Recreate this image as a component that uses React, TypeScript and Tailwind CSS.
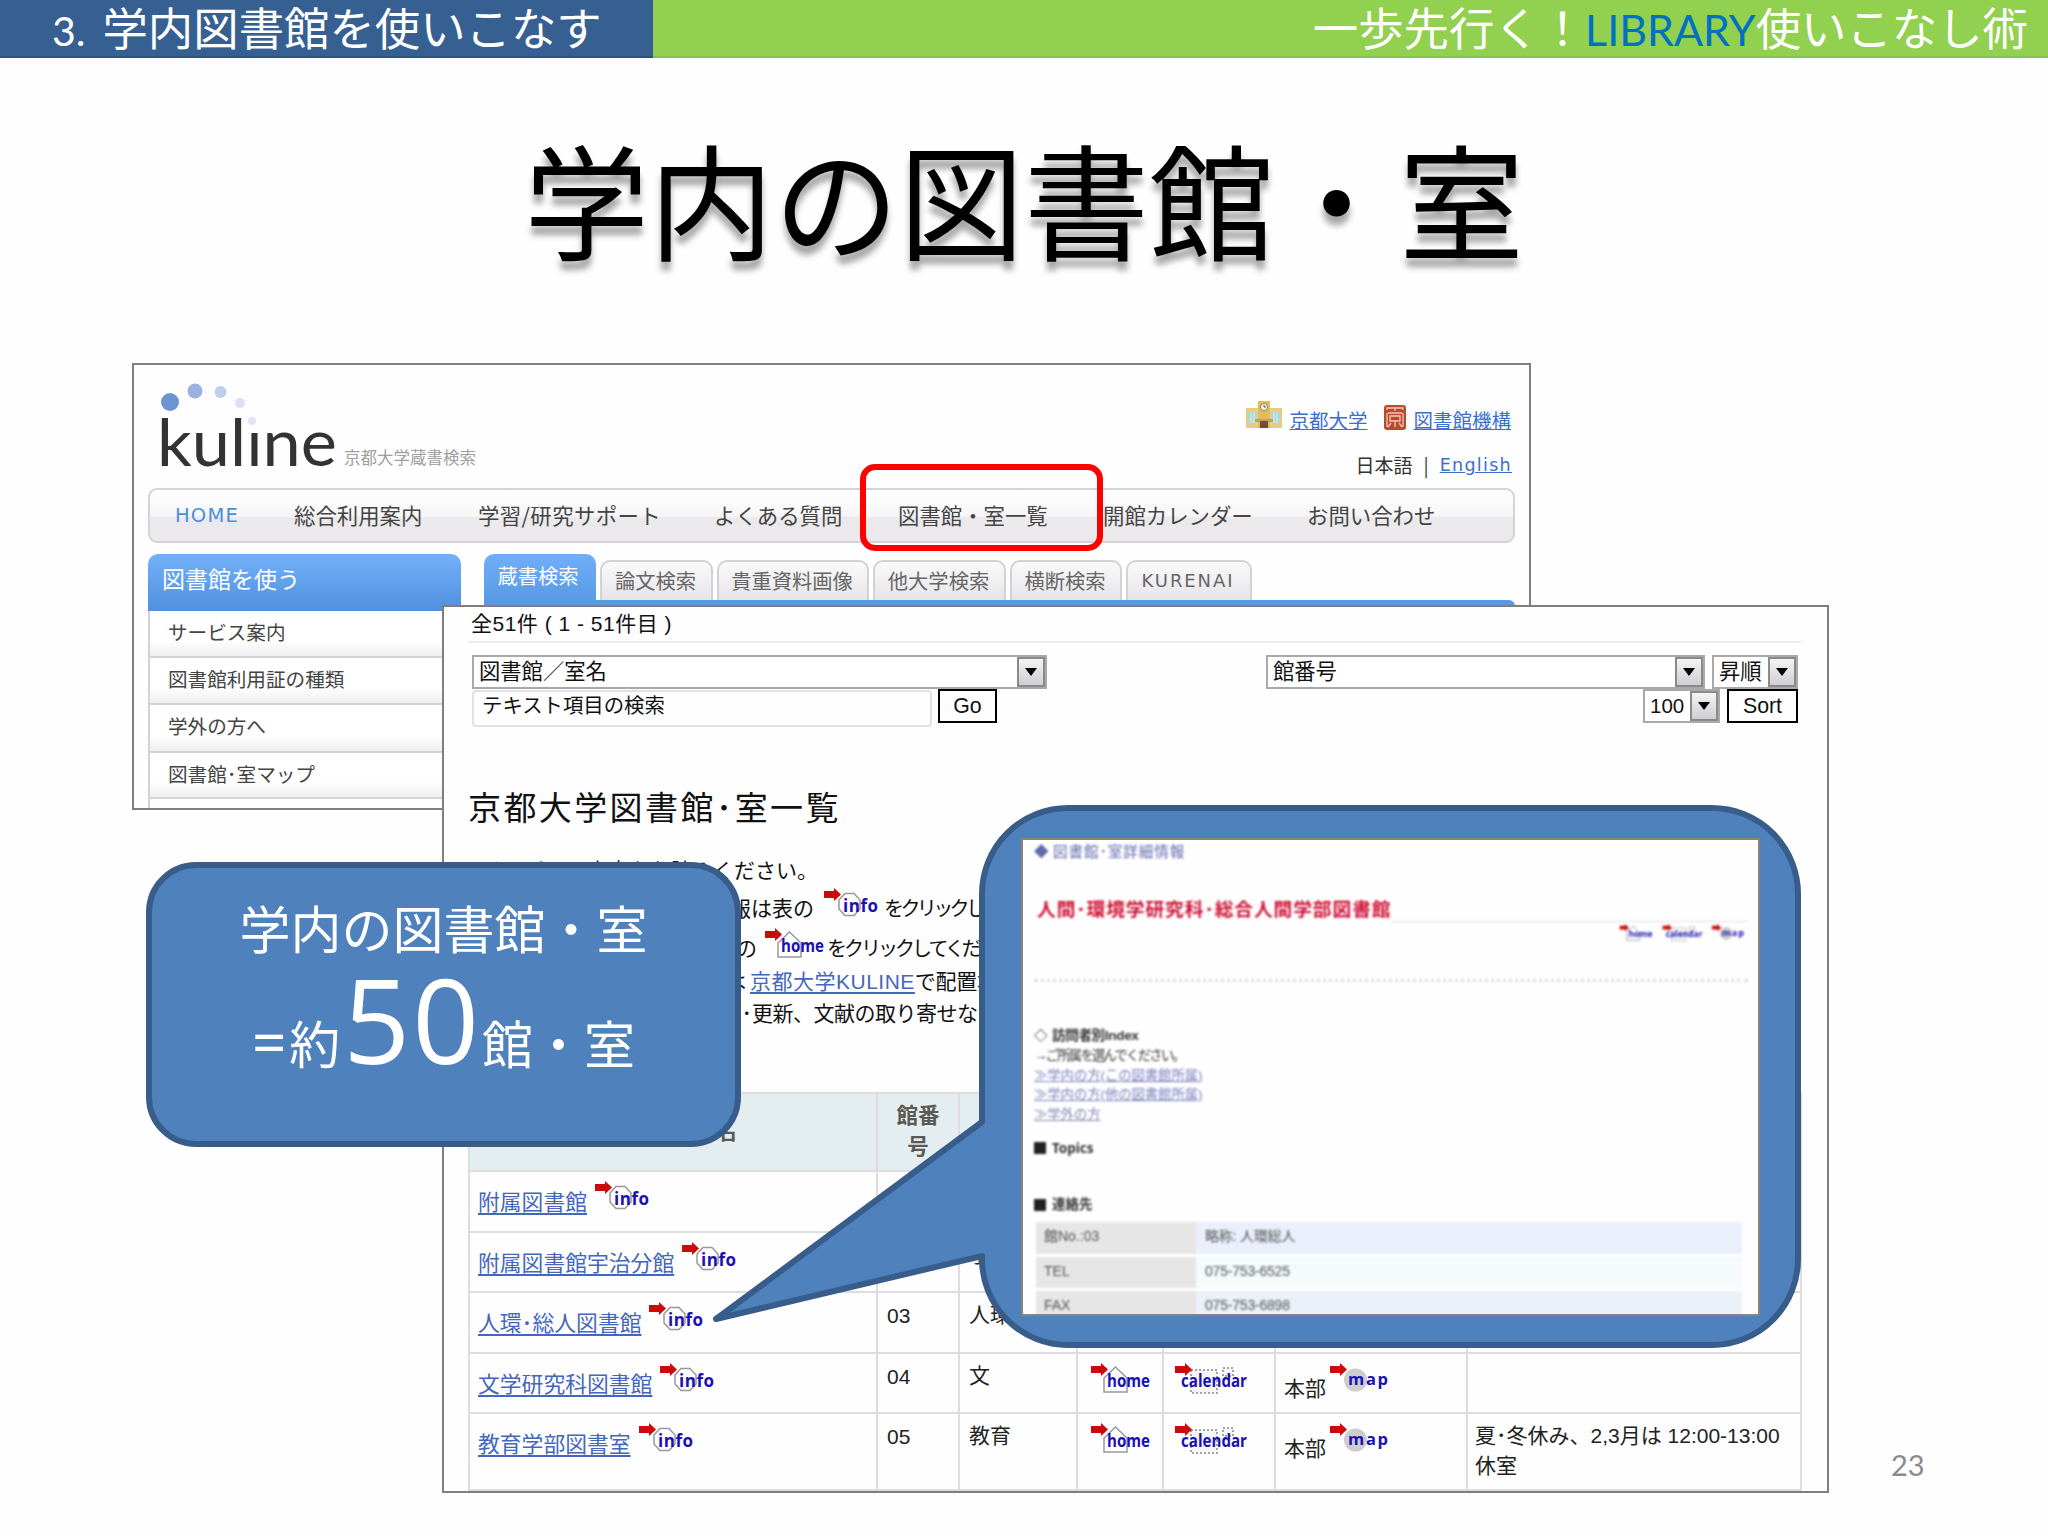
import { clsx } from "clsx";

const navItems = [
  { label: "HOME", cls: "w-[119px] text-[#4a8fdc] text-[19.500px] tracking-[1.200px]" },
  { label: "総合利用案内", cls: "w-[184px]" },
  { label: "学習/研究サポート", cls: "w-[236px] tracking-[0.400px]" },
  { label: "よくある質問", cls: "w-[184px]" },
  { label: "図書館・室一覧", cls: "w-[205px]" },
  { label: "開館カレンダー", cls: "w-[204px]" },
  { label: "お問い合わせ", cls: "w-[150px]" },
];

const menuItems = [
  { label: "サービス案内", cls: "h-[47px]" },
  { label: "図書館利用証の種類", cls: "h-[47px]" },
  { label: "学外の方へ", cls: "h-[48px]" },
  { label: "図書館･室マップ", cls: "h-[46px]" },
];

const tabs = [
  { label: "論文検索", cls: "w-[113px]" },
  { label: "貴重資料画像", cls: "w-[152px]" },
  { label: "他大学検索", cls: "w-[133px]" },
  { label: "横断検索", cls: "w-[112px]" },
  { label: "KURENAI", cls: "w-[126px] tracking-[1.900px]" },
];

const libraries = [
  { name: "附属図書館", no: "01", short: "附属", h: "h-[61px]", note: "" },
  { name: "附属図書館宇治分館", no: "02", short: "宇治", h: "h-[60px]", note: "" },
  { name: "人環･総人図書館", no: "03", short: "人環総人", h: "h-[61px]", note: "" },
  { name: "文学研究科図書館", no: "04", short: "文", h: "h-[60px]", note: "" },
  { name: "教育学部図書室", no: "05", short: "教育", h: "h-[77px]", note: "夏･冬休み、2,3月は 12:00-13:00 休室" },
];

const contacts = [
  { key: "館No.:03", value: "略称: 人環総人", left: "bg-[#e6e6e6]", right: "bg-[#e9f0fb]" },
  { key: "TEL", value: "075-753-6525", left: "bg-[#e6e6e6]", right: "bg-[#f5fafd]" },
  { key: "FAX", value: "075-753-6898", left: "bg-[#e6e6e6]", right: "bg-[#eaf1f9]" },
];

function RedArrow() {
  return <path d="M0 3h10V0l7 6.500-7 6.500V10H0z" fill="#cc0a0a" />;
}

function InfoIcon() {
  return (
    <svg className="shrink-0" width="57" height="34" viewBox="0 0 57 34">
      <path d="M21 5.500h9l6 6.500v9l-6 6.500h-9l-6-6.500v-9z" fill="#fff" stroke="#999" strokeWidth="1.500" />
      <RedArrow />
      <text x="19" y="23.500" textLength="35" fill="#1a10b4" fontSize="17" fontWeight="700" fontFamily="Open Sans, sans-serif">info</text>
    </svg>
  );
}

function HomeIcon() {
  return (
    <svg className="shrink-0" width="61" height="34" viewBox="0 0 61 34">
      <path d="M13 29V15L24.500 4 36 15v14z" fill="#fff" stroke="#999" strokeWidth="1.500" />
      <RedArrow />
      <text x="16" y="23.500" textLength="43" lengthAdjust="spacingAndGlyphs" fill="#1a10b4" fontSize="17" fontWeight="700" fontFamily="Open Sans, sans-serif">home</text>
    </svg>
  );
}

function CalendarIcon() {
  return (
    <svg className="shrink-0" width="74" height="34" viewBox="0 0 74 34">
      <path d="M16 7h26v23H16zM48 5h10v8H48z" fill="#f6f6f6" stroke="#888" strokeWidth="1.500" strokeDasharray="2 2" />
      <RedArrow />
      <text x="6" y="24" textLength="66" lengthAdjust="spacingAndGlyphs" fill="#1a10b4" fontSize="17" fontWeight="700" fontFamily="Open Sans, sans-serif">calendar</text>
    </svg>
  );
}

function MapIcon() {
  return (
    <svg className="shrink-0" width="60" height="34" viewBox="0 0 60 34">
      <circle cx="25.500" cy="17" r="11.500" fill="#cdcdcd" />
      <RedArrow />
      <text x="18" y="22" textLength="40" fill="#1a10b4" fontSize="16.500" fontWeight="700" fontFamily="Open Sans, sans-serif">map</text>
    </svg>
  );
}

function Logo() {
  return (
    <svg width="185" height="95" viewBox="0 0 185 95">
      <text x="2" y="86" textLength="180" lengthAdjust="spacingAndGlyphs" fill="#333" fontSize="65" fontFamily="Lato, sans-serif">kuline</text>
      <rect x="91" y="33" width="17" height="15" fill="#fefefe" />
      <circle cx="15" cy="22" r="9" fill="#6c93d2" />
      <circle cx="40" cy="11" r="7.500" fill="#9bb1e0" />
      <circle cx="65.500" cy="12" r="6" fill="#c1cee9" />
      <circle cx="85" cy="23" r="5" fill="#dbe1f0" />
      <circle cx="97" cy="41" r="4" fill="#e4e2f6" />
    </svg>
  );
}

function BuildingIcon() {
  return (
    <svg width="36" height="28" viewBox="0 0 36 28">
      <path d="M0 7h36v20H0z" fill="#e6cd84" />
      <path d="M2 11h9v11H2zM25 11h9v11h-9z" fill="#a5dbe0" />
      <path d="M5 11v11M8 11v11M28 11v11M31 11v11" stroke="#f5eab9" />
      <path d="M12 0h12v27H12z" fill="#dfbc62" />
      <circle cx="18" cy="6" r="3.500" fill="#fff" stroke="#9a7b3c" />
      <path d="M18 4v2h2" stroke="#444" fill="none" />
      <path d="M9 18h18v3H9z" fill="#c9a24c" />
      <path d="M14 20h8v7h-8z" fill="#6d5236" />
    </svg>
  );
}

function SealIcon() {
  return (
    <svg width="22" height="25" viewBox="0 0 22 25">
      <rect width="22" height="25" rx="3" fill="#b9492f" />
      <path d="M3 5V3h16v2M11 3v3M4 8h14M6 11h10v5H6zM11 16v6M7 18l-3 4M15 18l3 4M3 8v14M19 8v14" stroke="#f3c9b4" strokeWidth="1.300" fill="none" />
    </svg>
  );
}

function DropButton() {
  return (
    <span className="flex w-[28px] items-center justify-center border-2 border-[#8a8a8a] bg-linear-to-b from-[#f4f4f4] to-[#cfcfd2]">
      <svg width="12" height="8" viewBox="0 0 12 8">
        <path d="M0 0h12L6 8z" fill="#000" />
      </svg>
    </span>
  );
}

function SelectBox({ label, className }: { label: string; className: string }) {
  return (
    <div className={clsx("flex h-[34px] shrink-0 justify-between border-2 border-[#a9a9a9] bg-white pl-[5px]", className)}>
      <span className="leading-[30px]">{label}</span>
      <DropButton />
    </div>
  );
}

function KulineWindow() {
  return (
    <section className="absolute left-[132px] top-[363px] h-[447px] w-[1399px] overflow-hidden border-2 border-[#7f7f7f] bg-[#fefefe] font-['Noto_Sans_CJK_JP',sans-serif] text-[#444]">
      <div className="flex h-[123px] justify-between pl-[21px] pr-[17px]">
        <div className="flex pt-[15px]">
          <Logo />
          <span className="ml-[4px] mt-[65px] text-[16.500px] leading-[24px] text-[#a0a0a0]">京都大学蔵書検索</span>
        </div>
        <div className="flex flex-col items-end pt-[36px]">
          <div className="mr-[1px] flex h-[32px] text-[19.500px] leading-[32px] text-[#3a6fd0]">
            <BuildingIcon />
            <a className="ml-[7px] mt-[3px] underline">京都大学</a>
            <span className="ml-[17px] mr-[7px] mt-[4px]"><SealIcon /></span>
            <a className="mt-[3px] underline">図書館機構</a>
          </div>
          <div className="mt-[20px] flex text-[19px] leading-[24px] text-[#333]">
            <span>日本語</span>
            <span className="mx-[11px]">|</span>
            <a className="font-['DejaVu_Sans',sans-serif] text-[17.500px] tracking-[1.300px] text-[#3a6fd0] underline">English</a>
          </div>
        </div>
      </div>

      <nav className="ml-[14px] flex h-[55px] w-[1367px] whitespace-nowrap rounded-[9px] border-2 border-[#d4d3d6] bg-linear-to-b from-white from-0% via-[#f6f6f7] via-50% to-[#ebe9ec] to-55% pl-[25px] text-[21.400px]">
        {navItems.map((item) => (
          <a key={item.label} className={clsx("shrink-0 leading-[49px]", item.label === "HOME" && "font-['DejaVu_Sans',sans-serif] pt-[1px]", item.cls)}>
            {item.label}
          </a>
        ))}
      </nav>

      <div className="ml-[14px] mt-[11px] flex">
        <aside className="w-[313px]">
          <div className="h-[57px] rounded-t-[10px] bg-linear-to-b from-[#73b0fa] to-[#5090dc] pl-[14px] text-[23px] leading-[48px] text-white">
            図書館を使う
          </div>
          {menuItems.map((item) => (
            <div key={item.label} className={clsx("border-b-2 border-l-2 border-[#d3d3d6] bg-linear-to-b from-white from-65% to-[#efeef1] pl-[18px] text-[19.600px] leading-[41px]", item.cls)}>
              {item.label}
            </div>
          ))}
          <div className="h-[20px] border-l-2 border-[#d3d3d6]" />
        </aside>

        <div className="ml-[23px] w-[1031px]">
          <div className="flex h-[46px] items-end gap-[4px] text-[20.300px] text-[#666]">
            <div className="h-[46px] w-[112px] rounded-t-[10px] bg-linear-to-b from-[#70aef9] to-[#5a9ae4] pr-[4px] text-center leading-[43px] text-white">蔵書検索</div>
            {tabs.map((tab) => (
              <div key={tab.label} className={clsx("h-[40px] whitespace-nowrap rounded-t-[10px] border-2 border-b-0 border-[#d2d1d4] bg-linear-to-b from-[#fafafa] to-[#e6e4e8] pr-[2px] text-center", tab.label === "KURENAI" ? "font-['DejaVu_Sans',sans-serif] text-[18px] leading-[38px]" : "leading-[36px]", tab.cls)}>
                {tab.label}
              </div>
            ))}
          </div>
          <div className="h-[8px] rounded-tr-[6px] bg-[#5b98e0]" />
        </div>
      </div>
    </section>
  );
}

function LibraryTable() {
  const cell = "border-b-2 border-r-2 border-[#dcdce1]";
  return (
    <div className="ml-[24px] mt-[61px] w-[1334px] border-l-2 border-[#dcdce1]">
      <div className="grid h-[80px] grid-cols-[408px_82px_118px_86px_112px_192px_334px] border-t-2 border-[#dcdce1] bg-[#e4edf0] text-center text-[21.500px] font-bold text-[#5a5a55]">
        <div className={clsx("pl-[14px] leading-[76px]", cell)}>図書館/室名</div>
        <div className={clsx("px-[10px] pt-[7px] leading-[30.500px]", cell)}>館番号</div>
        <div className={cell} />
        <div className={cell} />
        <div className={cell} />
        <div className={cell} />
        <div className={cell} />
      </div>
      {libraries.map((lib) => (
        <div key={lib.no} className={clsx("grid grid-cols-[408px_82px_118px_86px_112px_192px_334px] text-[21px] leading-[30px] text-[#222]", lib.h)}>
          <div className={clsx("flex whitespace-nowrap pl-[8px] pt-[9px]", cell)}>
            <a className="mr-[8px] mt-[7px] text-[21.800px] leading-[30px] text-[#4467bd] underline underline-offset-[3px]">{lib.name}</a>
            <InfoIcon />
          </div>
          <div className={clsx("pl-[9px] pt-[8px]", cell)}>{lib.no}</div>
          <div className={clsx("whitespace-nowrap pl-[9px] pt-[7px]", cell)}>{lib.short}</div>
          <div className={clsx("pl-[13px] pt-[9px]", cell)}><HomeIcon /></div>
          <div className={clsx("pl-[11px] pt-[9px]", cell)}><CalendarIcon /></div>
          <div className={clsx("flex pl-[8px] pt-[9px]", cell)}>
            <span className="mr-[4px] mt-[11px]">本部</span>
            <MapIcon />
          </div>
          <div className={clsx("pl-[7px] pr-[16px] pt-[7px]", cell)}>{lib.note}</div>
        </div>
      ))}
    </div>
  );
}

function ListWindow() {
  return (
    <section className="absolute left-[442px] top-[605px] h-[888px] w-[1387px] overflow-hidden border-2 border-[#7f7f7f] bg-[#fefefe] font-['Liberation_Sans','Noto_Sans_CJK_JP',sans-serif] text-[21.300px] text-[#111]">
      <div className="ml-[24px] mr-[26px] h-[36px] border-b-2 border-[#ececec] pl-[3px] text-[21px] leading-[34px] tracking-[0.500px]">
        全51件 ( 1 - 51件目 )
      </div>
      <div className="ml-[28px] mr-[29px] mt-[12px] flex">
        <SelectBox label="図書館／室名" className="w-[575px]" />
        <SelectBox label="館番号" className="ml-auto w-[439px]" />
        <SelectBox label="昇順" className="ml-[7px] w-[86px]" />
      </div>
      <div className="ml-[28px] mr-[29px] flex h-[38px]">
        <div className="mt-[1px] h-[37px] w-[460px] rounded-[4px] border-2 border-[#e2e2e6] pl-[8px] text-[20.400px] leading-[29px]">テキスト項目の検索</div>
        <button className="ml-[6px] h-[34px] w-[59px] border-2 border-black text-center leading-[30px]">Go</button>
        <SelectBox label="100" className="ml-auto w-[77px] text-[20.500px]" />
        <button className="ml-[7px] h-[34px] w-[71px] border-2 border-black text-center leading-[30px]">Sort</button>
      </div>
      <h2 className="ml-[24px] mt-[62px] text-[33px] leading-[40px] tracking-[2.400px]">京都大学図書館･室一覧</h2>

      <div className="mt-[26px] whitespace-nowrap text-[21px]">
        <div className="w-[374px] text-right leading-[32px]"><a className="text-[#4467bd]">サービス</a>の案内をお読みください。</div>
        <div className="mt-[2px] flex h-[40px] leading-[40px]">
          <span className="mr-[10px] w-[370px] text-right">各館の利用案内や詳細情報は表の</span>
          <span className="-mt-[1px]"><InfoIcon /></span>
          <span className="ml-[3px] text-[20px] tracking-[-3.600px]">をクリックしてください。</span>
        </div>
        <div className="flex h-[40px] leading-[40px]">
          <span className="mr-[8px] w-[313px] text-right">ホームページは表の</span>
          <span className="-mt-[1px]"><HomeIcon /></span>
          <span className="ml-[1px] text-[20px] tracking-[-3px]">をクリックしてください。</span>
        </div>
        <div className="flex h-[28px] leading-[26px]">
          <span className="mr-[4px] w-[302px] text-right">図書・雑誌の所蔵は</span>
          <a className="tracking-[0.500px] text-[#4467bd] underline underline-offset-[3px]">京都大学KULINE</a>
          <span className="tracking-[-0.300px]">で配置場所を</span>
        </div>
        <div className="flex h-[34px] leading-[33px]">
          <span className="w-[308px] text-right">貸出の予約･</span>
          <span className="tracking-[-0.500px]">更新、文献の取り寄せなど</span>
        </div>
      </div>
      <LibraryTable />
    </section>
  );
}

function DetailPanel() {
  return (
    <div className="absolute left-[1021px] top-[838px] h-[478px] w-[739px] overflow-hidden border-2 border-[#8b8478] bg-[#fefefe] font-['Liberation_Sans','Noto_Sans_CJK_JP',sans-serif] text-[14px] text-[#333]">
      <div className="pl-[11px] pr-[10px] blur-[0.800px]">
        <div className="flex gap-[4px] text-[14.600px] leading-[24px] tracking-[0.900px] text-[#5f69ad]">
          <span className="w-[15px]">◆</span>
          <span>図書館･室詳細情報</span>
        </div>
        <div className="mt-[34px] flex items-center pl-[3px]">
          <h3 className="text-[18.700px] font-bold leading-[24px] tracking-[0.950px] text-[#cf1034]">人間･環境学研究科･総合人間学部図書館</h3>
          <span className="mt-[22px] h-[1px] flex-1 bg-[#e4e4e4]" />
        </div>
        <div className="flex h-[20px] justify-end gap-[7px] pr-[2px] pt-[2px]">
          <svg width="37" height="19" viewBox="0 0 61 34"><HomeIcon /></svg>
          <svg width="42" height="19" viewBox="0 0 74 34"><CalendarIcon /></svg>
          <svg width="35" height="19" viewBox="0 0 60 34"><MapIcon /></svg>
        </div>
        <div className="mt-[37px] border-t-3 border-dotted border-[#dedbe0]" />
        <div className="mt-[43px] flex gap-[3px] text-[13.500px] font-bold leading-[21px] tracking-[-0.300px]">
          <span className="w-[15px]">◇</span>
          <span>訪問者別Index</span>
        </div>
        <div className="text-[13.300px] leading-[19.500px]">
          <p className="tracking-[-1.700px]">→ご所属を選んでください。</p>
          <p><a className="text-[#7880bd] underline">≫学内の方(この図書館所属)</a></p>
          <p><a className="text-[#7880bd] underline">≫学内の方(他の図書館所属)</a></p>
          <p><a className="text-[#8087ae] underline">≫学外の方</a></p>
        </div>
        <div className="mt-[14px] flex items-center gap-[6px] text-[13.500px] font-bold leading-[20px]">
          <span className="size-[12px] bg-[#222]" />
          <span className="font-['Noto_Sans',sans-serif]">Topics</span>
        </div>
        <div className="mt-[37px] flex items-center gap-[6px] text-[13.500px] font-bold leading-[20px]">
          <span className="size-[12px] bg-[#222]" />
          <span>連絡先</span>
        </div>
        <div className="mt-[7px] flex flex-col gap-[3px] pl-[2px] pr-[6px]">
          {contacts.map((row) => (
            <div key={row.key} className="flex h-[31.500px] leading-[28px] text-[#555]">
              <div className={clsx("w-[160px] pl-[8px]", row.left)}>{row.key}</div>
              <div className={clsx("flex-1 pl-[9px] tracking-[-0.200px]", row.right)}>{row.value}</div>
            </div>
          ))}
        </div>
      </div>
    </div>
  );
}

export default function App() {
  return (
    <main className="relative h-[1536px] w-[2048px] overflow-hidden bg-[#fefefe] font-['Noto_Sans_CJK_JP',sans-serif]">
      <header className="flex h-[58px] text-[45.400px] leading-[52px] text-white">
        <div className="w-[653px] border-b-2 border-[#2e527f] bg-[#376092] pl-[52px]">
          <span className="mr-[17px] font-['Lato',sans-serif] text-[41px]">3.</span>学内図書館を使いこなす
        </div>
        <div className="flex-1 border-b-2 border-[#86c346] bg-[#92d050] pr-[20px] text-right">
          一歩先行く！<span className="font-['Lato',sans-serif] text-[43px] text-[#0070c0]">LIBRARY</span>使いこなし術
        </div>
      </header>

      <h1 className="mt-[64px] text-center text-[125px] leading-[150px] text-black [text-shadow:0_9px_6px_rgba(0,0,0,0.35)]">
        学内の図書館・室
      </h1>

      <KulineWindow />
      <ListWindow />

      {/* highlight around the library list link */}
      <div className="absolute left-[860px] top-[464px] h-[87px] w-[243px] rounded-[15px] border-6 border-[#fe0000]" />

      <div className="absolute left-[146px] top-[862px] flex h-[285px] w-[595px] flex-col items-center rounded-[50px] border-6 border-[#385d8a] bg-[#4f81bd] text-[51px] text-white">
        <p className="mt-[29px] leading-[60px]">学内の図書館・室</p>
        <p className="mt-[7px] flex items-baseline leading-[110px]">
          <span className="mr-[3px] font-['Noto_Sans',sans-serif] text-[60px]">=</span>約
          <span className="ml-[3px] mr-[1px] font-['Open_Sans',sans-serif] text-[117px] tracking-[2px]">50</span>館・室
        </p>
      </div>

      <svg className="absolute left-[700px] top-[790px]" width="1120" height="570" viewBox="700 790 1120 570">
        <path
          d="M1068 808H1712A86 86 0 0 1 1798 894V1259A86 86 0 0 1 1712 1345H1068A86 86 0 0 1 982 1259V1256L716 1319L982 1122V894A86 86 0 0 1 1068 808Z"
          fill="#4f81bd"
          stroke="#385d8a"
          strokeWidth="6"
          strokeLinejoin="round"
        />
      </svg>
      <DetailPanel />

      <span className="absolute left-[1891px] top-[1447px] font-['Lato',sans-serif] text-[29px] leading-[36px] text-[#8b8b8b]">23</span>
    </main>
  );
}
